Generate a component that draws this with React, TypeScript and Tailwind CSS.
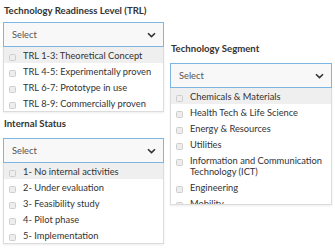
import React from "react";

type FieldProps = {
  title: string;
  options: string[];
  listHeight?: string;
  className?: string;
  titleGap?: string;
};

const Chevron = () => (
  <svg width="9" height="6" viewBox="0 0 9 6" className="text-[#333]">
    <path d="M1 1.2 L4.5 4.6 L8 1.2" fill="none" stroke="currentColor" strokeWidth="1.6" />
  </svg>
);

const Checkbox = () => (
  <span className="mt-[4px] inline-block h-[7px] w-[7px] shrink-0 rounded-[1.5px] border border-[#cdcdcd] bg-[#eeeeee]" />
);

const Field = ({ title, options, listHeight, className, titleGap }: FieldProps) => {
  return (
    <div className={className}>
      <div className={`flex h-[13px] items-center pl-[1px] text-[9.6px] font-bold text-[#333] ${titleGap}`}>
        {title}
      </div>
      <div className="flex h-[25px] items-center justify-between border border-[#7db6e3] bg-[#f8f8f8] pl-[8px] pr-[7px] text-[9.3px] text-[#555]">
        <span>Select</span>
        <Chevron />
      </div>
      <div
        className={`overflow-hidden border border-t-0 border-[#dcdcdc] bg-white shadow-[0_1px_2px_rgba(0,0,0,0.08)] ${listHeight ?? ""}`}
      >
        {options.map((opt, i) => (
          <div
            key={opt}
            className={`flex gap-[7px] py-[2.5px] pl-[5px] pr-[2px] text-[9.3px] leading-[11px] text-[#333] ${
              i === 0 ? "bg-[#efefef]" : ""
            }`}
          >
            <Checkbox />
            <span>{opt}</span>
          </div>
        ))}
      </div>
    </div>
  );
};

export default function App() {
  return (
    <div
      className="flex h-[249px] w-[335px] gap-[6px] overflow-hidden bg-white pl-[3px] pt-[5px]"
      style={{ fontFamily: "Lato, 'Open Sans', sans-serif" }}
    >
      <div className="flex w-[161px] flex-col">
        <Field
          title="Technology Readiness Level (TRL)"
          titleGap="mb-[4px]"
          options={[
            "TRL 1-3: Theoretical Concept",
            "TRL 4-5: Experimentally proven",
            "TRL 6-7: Prototype in use",
            "TRL 8-9: Commercially proven",
          ]}
        />
        <Field
          className="mt-[6px]"
          title="Internal Status"
          titleGap="mb-[7px]"
          options={[
            "1- No internal activities",
            "2- Under evaluation",
            "3- Feasibility study",
            "4- Pilot phase",
            "5- Implementation",
          ]}
        />
      </div>
      <div className="w-[162px] pt-[38px]">
        <Field
          title="Technology Segment"
          titleGap="mb-[7px]"
          listHeight="h-[117px]"
          options={[
            "Chemicals & Materials",
            "Health Tech & Life Science",
            "Energy & Resources",
            "Utilities",
            "Information and Communication Technology (ICT)",
            "Engineering",
            "Mobility",
          ]}
        />
      </div>
    </div>
  );
}
